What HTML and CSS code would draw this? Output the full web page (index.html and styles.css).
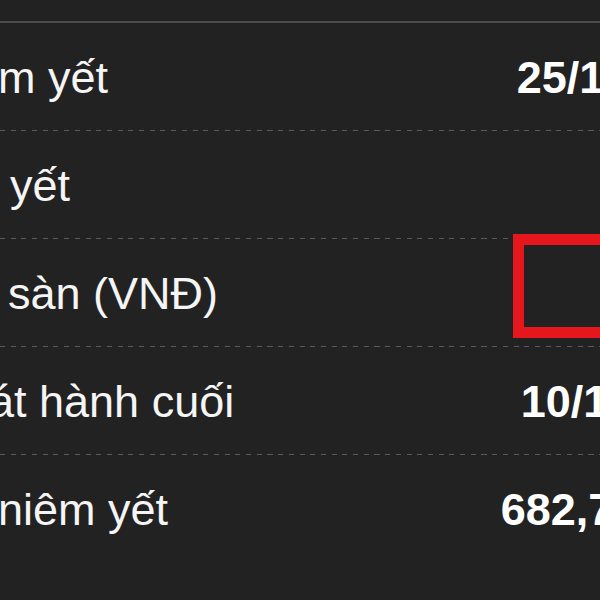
FILE: index.html
```html
<!DOCTYPE html>
<html lang="vi">
<head>
<meta charset="utf-8">
<title>Thông tin niêm yết</title>
<link rel="stylesheet" href="styles.css">
</head>
<body>
<div class="info-table">
  <div class="row">
    <span class="label l1">m yết</span>
    <span class="value">25/12/2017</span>
  </div>
  <div class="row">
    <span class="label l2">yết</span>
    <span class="value"></span>
  </div>
  <div class="row">
    <span class="label l3">sàn (VNĐ)</span>
    <span class="value"></span>
    <span class="highlight"></span>
  </div>
  <div class="row">
    <span class="label l4">át hành cuối</span>
    <span class="value date-alt">10/12/2019</span>
  </div>
  <div class="row last">
    <span class="label l5">niêm yết</span>
    <span class="value qty">682,721,637</span>
  </div>
</div>
</body>
</html>
```
FILE: styles.css
```css
html, body {
  margin: 0;
  padding: 0;
  background: #222222;
  overflow: hidden;
}

body {
  width: 600px;
  height: 600px;
  font-family: "Liberation Sans", Arial, sans-serif;
  color: #f5f5f5;
}

.info-table {
  width: 742px;
  margin-top: 21px;
  border-top: 2px solid #4b4b4b;
}

.row {
  position: relative;
  display: flex;
  align-items: center;
  justify-content: space-between;
  height: 108px;
  box-sizing: border-box;
  font-size: 45px;
  line-height: 1;
  background: repeating-linear-gradient(90deg, #5a5a5a 0 5px, transparent 5px 10.7px) left bottom / 100% 1px no-repeat;
}

.row.last {
  background: none;
}

.label {
  white-space: nowrap;
  font-weight: 400;
}

.l1 { text-indent: -2px; }
.l2 { text-indent: 10px; }
.l3 { text-indent: 8px; }
.l4 { text-indent: -11px; }
.l5 { text-indent: -2px; }

.value {
  font-weight: 700;
  color: #ffffff;
  white-space: nowrap;
  text-align: right;
}

.date-alt {
  margin-right: -4px;
}

.qty {
  margin-right: -9px;
}

.highlight {
  position: absolute;
  left: 513px;
  top: -5px;
  width: 140px;
  height: 104px;
  box-sizing: border-box;
  border: 11px solid #e6171c;
}
```
